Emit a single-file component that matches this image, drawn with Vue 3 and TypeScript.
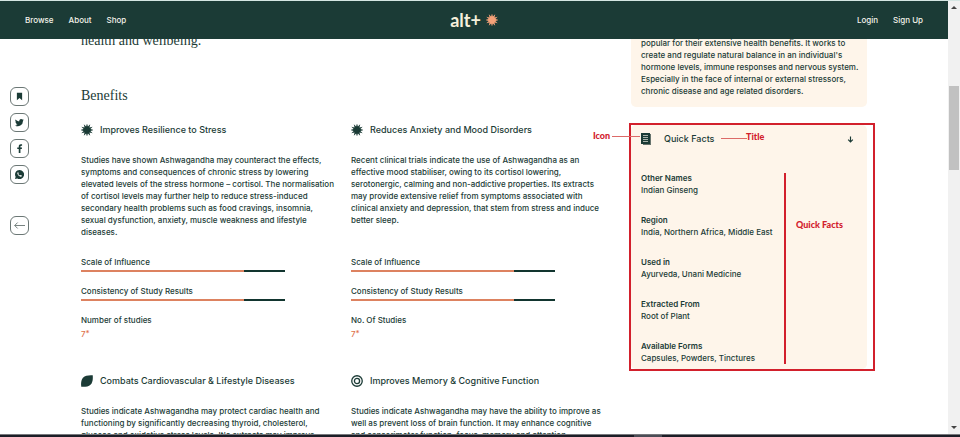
<script setup lang="ts">
interface Stat {
  label: string
  value: number
}

interface Benefit {
  title: string
  icon: 'burst' | 'leaf' | 'rings'
  text: string
  stats: Stat[]
  countLabel: string
  count: string
}

interface Fact {
  name: string
  value: string
}

const stats: Stat[] = [
  { label: 'Scale of Influence', value: 80 },
  { label: 'Consistency of Study Results', value: 80 },
]

const benefits: Benefit[] = [
  {
    title: 'Improves Resilience to Stress',
    icon: 'burst',
    text: `Studies have shown Ashwagandha may counteract the effects,
symptoms and consequences of chronic stress by lowering
elevated levels of the stress hormone – cortisol. The normalisation
of cortisol levels may further help to reduce stress-induced
secondary health problems such as food cravings, insomnia,
sexual dysfunction, anxiety, muscle weakness and lifestyle
diseases.`,
    stats,
    countLabel: 'Number of studies',
    count: '7',
  },
  {
    title: 'Reduces Anxiety and Mood Disorders',
    icon: 'burst',
    text: `Recent clinical trials indicate the use of Ashwagandha as an
effective mood stabiliser, owing to its cortisol lowering,
serotonergic, calming and non-addictive properties. Its extracts
may provide extensive relief from symptoms associated with
clinical anxiety and depression, that stem from stress and induce
better sleep.`,
    stats,
    countLabel: 'No. Of Studies',
    count: '7',
  },
  {
    title: 'Combats Cardiovascular & Lifestyle Diseases',
    icon: 'leaf',
    text: `Studies indicate Ashwagandha may protect cardiac health and
functioning by significantly decreasing thyroid, cholesterol,
glucose and oxidative stress levels. It's extracts may improve`,
    stats: [],
    countLabel: '',
    count: '',
  },
  {
    title: 'Improves Memory & Cognitive Function',
    icon: 'rings',
    text: `Studies indicate Ashwagandha may have the ability to improve as
well as prevent loss of brain function. It may enhance cognitive
and sensorimotor function, focus, memory and attention.`,
    stats: [],
    countLabel: '',
    count: '',
  },
]

const facts: Fact[] = [
  { name: 'Other Names', value: 'Indian Ginseng' },
  { name: 'Region', value: 'India, Northern Africa, Middle East' },
  { name: 'Used in', value: 'Ayurveda, Unani Medicine' },
  { name: 'Extracted From', value: 'Root of Plant' },
  { name: 'Available Forms', value: 'Capsules, Powders, Tinctures' },
]

const summary = `popular for their extensive health benefits. It works to
create and regulate natural balance in an individual's
hormone levels, immune responses and nervous system.
Especially in the face of internal or external stressors,
chronic disease and age related disorders.`

/* Star polygon with alternating outer and inner radii, centred in a 24 unit box. */
function burst(points: number, outer: number, inner: number): string {
  return Array.from({ length: points * 2 }, (_, i) => {
    const r = i % 2 === 0 ? outer : inner
    const a = (Math.PI * i) / points - Math.PI / 2
    return `${(12 + r * Math.cos(a)).toFixed(2)},${(12 + r * Math.sin(a)).toFixed(2)}`
  }).join(' ')
}

const burstPoints = burst(12, 13, 7)
</script>

<template>
  <div class="page">
    <div class="window">
      <div class="site">
        <header class="topbar">
          <nav class="links" aria-label="Main">
            <a href="#browse">Browse</a>
            <a href="#about">About</a>
            <a href="#shop">Shop</a>
          </nav>
          <a class="logo" href="#home">
            <span>alt+</span>
            <svg viewBox="0 0 24 24" aria-hidden="true"><polygon :points="burstPoints" /></svg>
          </a>
          <nav class="links account" aria-label="Account">
            <a href="#login">Login</a>
            <a href="#signup">Sign Up</a>
          </nav>
        </header>

        <div class="body">
          <aside class="rail" aria-label="Share">
            <button type="button" aria-label="Bookmark">
              <svg viewBox="0 0 24 24"><path d="M5 2h14v20l-7-6-7 6z" /></svg>
            </button>
            <button type="button" aria-label="Twitter">
              <svg viewBox="0 0 24 24"><path d="M23.6 4.9c-.9.4-1.8.6-2.7.8 1-.6 1.700-1.500 2.100-2.600-.9.500-2 .9-3.100 1.200a4.800 4.800 0 0 0-8.300 4.400C7.500 8.500 4 6.600 1.600 3.700a4.800 4.800 0 0 0 1.500 6.400c-.8 0-1.500-.2-2.200-.6 0 2.300 1.600 4.400 3.900 4.900-.7.200-1.400.200-2.200.1.600 1.900 2.400 3.300 4.500 3.300A9.800 9.800 0 0 1 0 19.800a13.800 13.800 0 0 0 21.200-12.300c.9-.7 1.800-1.600 2.400-2.600z" /></svg>
            </button>
            <button type="button" aria-label="Facebook">
              <svg viewBox="0 0 24 24"><path d="M14.500 24V13.500h3.700l.6-4.300h-4.300V6.800c0-1.200.5-2 2.200-2h2.200V.9C18.500.8 17.100.7 15.700.7c-3.500 0-5.700 1.900-5.700 5.400v3.100H6v4.300h4V24z" /></svg>
            </button>
            <button type="button" aria-label="WhatsApp">
              <svg viewBox="0 0 24 24">
                <path d="M12 0A12 12 0 0 0 1.700 18L0 24l6.200-1.600A12 12 0 1 0 12 0z" />
                <path class="cut" d="M8.300 5.800c-.8 0-2.200 1.200-2.200 3 0 3.600 5 8.900 8.900 9 2.200 0 3.300-1.400 3.300-2.700 0-.6-2.800-1.900-3.300-1.900s-1.100 1.700-1.700 1.600c-1.300-.3-3.800-2.500-4.300-4-.1-.6 1.100-1.200 1.100-1.900 0-.6-.9-3.100-1.800-3.100z" />
              </svg>
            </button>
            <button type="button" class="back" aria-label="Back">
              <svg viewBox="0 0 24 24"><path d="M8 5.500 1.500 12 8 18.500M1.500 12H24" /></svg>
            </button>
          </aside>

          <main class="content">
            <section class="benefits">
              <p class="intro">health and wellbeing.</p>
              <h2>Benefits</h2>
              <div class="grid">
                <article v-for="b in benefits" :key="b.title" class="benefit">
                  <h3>
                    <svg v-if="b.icon === 'burst'" viewBox="0 0 24 24" aria-hidden="true">
                      <polygon :points="burstPoints" />
                    </svg>
                    <svg v-else-if="b.icon === 'leaf'" viewBox="0 0 24 24" aria-hidden="true">
                      <path d="M.5 23.500C-.5 16 .5 9.500 4 5.500 8 1 15.500 0 23.500.5c.5 8 .0 14.500-4.500 18.800-4 3.700-10.500 4.700-18.500 4.200z" />
                    </svg>
                    <svg v-else class="rings" viewBox="0 0 24 24" aria-hidden="true">
                      <circle cx="12" cy="12" r="10.500" />
                      <circle cx="12" cy="12" r="5.200" />
                    </svg>
                    <span>{{ b.title }}</span>
                  </h3>
                  <p class="copy">{{ b.text }}</p>
                  <div v-if="b.stats.length" class="stats">
                    <div v-for="s in b.stats" :key="s.label" class="stat">
                      <span>{{ s.label }}</span>
                      <div class="bar" role="img" :aria-label="s.label">
                        <div class="fill" :style="{ width: s.value + '%' }"></div>
                      </div>
                    </div>
                    <div class="stat">
                      <span>{{ b.countLabel }}</span>
                      <a class="count" href="#studies">{{ b.count }}<sup>*</sup></a>
                    </div>
                  </div>
                </article>
              </div>
            </section>

            <aside class="side">
              <section class="card summary">
                <p class="copy">{{ summary }}</p>
              </section>

              <section class="card facts">
                <header class="facts-head">
                  <svg class="note" viewBox="0 0 10 12" aria-hidden="true">
                    <path class="back-sheet" d="M8 1h2v11H2v-1h6z" />
                    <path d="M0 0h9v11H0z" />
                    <path class="rules" d="M2 2.500h5M2 4.500h5M2 6.500h5M2 8.500h5" />
                  </svg>
                  <h3>Quick Facts</h3>
                  <button type="button" aria-label="Collapse quick facts">
                    <svg viewBox="0 0 18 18"><path d="M9 1v14M3 9.500 9 15.500l6-6" /></svg>
                  </button>
                </header>
                <dl>
                  <div v-for="f in facts" :key="f.name">
                    <dt>{{ f.name }}</dt>
                    <dd>{{ f.value }}</dd>
                  </div>
                </dl>

                <div class="mark frame"></div>
                <div class="mark span"></div>
                <div class="mark lead-icon"></div>
                <div class="mark lead-title"></div>
                <span class="mark tag tag-icon">Icon</span>
                <span class="mark tag tag-title">Title</span>
                <span class="mark tag tag-facts">Quick Facts</span>
              </section>
            </aside>
          </main>
        </div>
      </div>

      <div class="scrollbar" aria-hidden="true">
        <svg viewBox="0 0 12 12"><path d="M3 8h6L6 5z" /></svg>
        <div class="track"><div class="thumb"></div></div>
        <svg viewBox="0 0 12 12"><path d="M3 4h6L6 7z" /></svg>
      </div>
    </div>
    <div class="taskbar"><div class="task"></div></div>
  </div>
</template>

<style>
body {
  margin: 0;
}
</style>

<style scoped>
.page {
  --green: #1b3b36;
  --cream: #fef5ea;
  --orange: #dd8260;
  --red: #d2202c;
  display: flex;
  flex-direction: column;
  height: 100vh;
  box-sizing: border-box;
  border-top: 1px solid #d5e6e3;
  background: #fff;
  color: var(--green);
  font: 500 8px/12px Inter, sans-serif;
  overflow: hidden;
}

h2,
h3,
p,
dl,
dd {
  margin: 0;
}

a {
  color: inherit;
  text-decoration: none;
}

button {
  display: flex;
  align-items: center;
  justify-content: center;
  padding: 0;
  border: 0;
  background: none;
  color: inherit;
  cursor: pointer;
}

svg {
  display: block;
  flex: none;
  fill: currentColor;
}

.window {
  display: flex;
  flex: 1;
  min-height: 0;
}

.site {
  display: flex;
  flex: 1;
  flex-direction: column;
  min-width: 0;
}

.topbar {
  display: grid;
  grid-template-columns: 1fr auto 1fr;
  align-items: center;
  flex: none;
  height: 38px;
  padding: 0 25px;
  background: var(--green);
  color: #f4f3ea;
}

.links {
  display: flex;
  gap: 15px;
}

.account {
  justify-content: flex-end;
}

.logo {
  display: flex;
  align-items: center;
  gap: 5px;
  color: #f6f0dc;
  font: 700 18px/24px Lato, sans-serif;
}

.logo svg {
  width: 12px;
  height: 12px;
  fill: #f5a178;
}

.body {
  display: flex;
  flex: 1;
  min-height: 0;
  overflow: hidden;
}

.rail {
  display: flex;
  flex: none;
  flex-direction: column;
  gap: 7px;
  width: 71px;
  padding: 48px 0 0 10px;
}

.rail button {
  box-sizing: border-box;
  width: 19px;
  height: 19px;
  border: 1px solid #6b7775;
  border-radius: 6px;
}

.rail svg {
  width: 9px;
  height: 9px;
}

.rail .cut {
  fill: #fff;
}

.rail .back {
  margin-top: 25px;
}

.rail .back svg {
  width: 11px;
  height: 11px;
  fill: none;
  stroke: #6b7775;
  stroke-width: 2;
}

.content {
  display: grid;
  grid-template-columns: minmax(0, 550fr) minmax(0, 236fr);
  flex: 1;
  align-items: start;
  min-width: 0;
  margin-right: 81px;
}

.benefits {
  margin-top: -8px;
}

.intro,
h2 {
  font: 400 14px/20px "Liberation Serif", serif;
}

h2 {
  margin-top: 35px;
}

.grid {
  display: grid;
  grid-template-columns: minmax(0, 270fr) minmax(0, 280fr);
  row-gap: 33px;
  margin-top: 16px;
}

.benefit {
  display: flex;
  flex-direction: column;
}

.benefit h3 {
  display: flex;
  align-items: center;
  gap: 7px;
  font: 500 9px/16px Inter, sans-serif;
}

.benefit h3 svg {
  width: 12px;
  height: 12px;
}

.rings {
  fill: none;
  stroke: currentColor;
  stroke-width: 2.6;
}

.copy {
  white-space: pre;
}

.benefit .copy {
  flex: 1;
  margin-top: 16px;
}

.stats {
  display: flex;
  flex-direction: column;
  gap: 13px;
  width: 204px;
  margin-top: 18px;
}

.stat {
  display: flex;
  flex-direction: column;
  gap: 2px;
}

.bar {
  height: 2px;
  background: #12352f;
}

.fill {
  height: 100%;
  background: var(--orange);
}

.count {
  color: #e0714a;
}

.count sup {
  font-size: 8px;
  line-height: 0;
  vertical-align: 1px;
}

.side {
  display: flex;
  flex-direction: column;
  gap: 18px;
}

.card {
  padding: 10px;
  border-radius: 5px;
  background: var(--cream);
}

.summary {
  margin-top: -12px;
}

.facts {
  position: relative;
  padding: 6px 10px 5px;
}

.facts-head {
  display: flex;
  align-items: center;
  gap: 13px;
}

.facts-head h3 {
  flex: 1;
  font: 500 9px/16px Inter, sans-serif;
}

.facts-head button {
  padding: 0 3px;
}

.facts-head button svg {
  width: 7px;
  height: 7px;
  fill: none;
  stroke: currentColor;
  stroke-width: 3;
}

.note {
  width: 10px;
  height: 12px;
}

.note .back-sheet {
  fill: #66736d;
}

.note .rules {
  stroke: #a9b3ab;
  stroke-width: 1;
}

.facts dl {
  display: flex;
  flex-direction: column;
  gap: 18px;
  margin-top: 25px;
}

.facts dt {
  font-weight: 600;
}

.mark {
  position: absolute;
  pointer-events: none;
}

.frame {
  inset: -2px -8px -2px -2px;
  border: 2px solid var(--red);
}

.span {
  top: 48px;
  bottom: 5px;
  left: 153px;
  width: 2px;
  background: var(--red);
}

.lead-icon,
.lead-title {
  height: 1px;
  background: #dc6a68;
}

.lead-icon {
  top: 11px;
  left: -19px;
  width: 28px;
}

.lead-title {
  top: 13px;
  left: 90px;
  width: 26px;
}

.tag {
  color: var(--red);
  font: 900 9px/12px Lato, sans-serif;
  white-space: nowrap;
}

.tag-icon {
  top: 5px;
  left: -38px;
}

.tag-title {
  top: 6px;
  left: 115px;
}

.tag-facts {
  top: 94px;
  left: 165px;
}

.scrollbar {
  display: flex;
  flex: none;
  flex-direction: column;
  width: 12px;
  background: #f1f1f1;
}

.scrollbar svg {
  width: 12px;
  height: 12px;
  fill: #444;
}

.track {
  flex: 1;
  padding: 73px 1px 0;
}

.thumb {
  height: 84px;
  background: #c1c1c1;
}

.taskbar {
  flex: none;
  height: 2px;
  padding-left: 66%;
  border-top: 1px solid #77787c;
  background: #1c1d26;
}

.task {
  width: 28px;
  height: 2px;
  background: #4b4c55;
}
</style>
